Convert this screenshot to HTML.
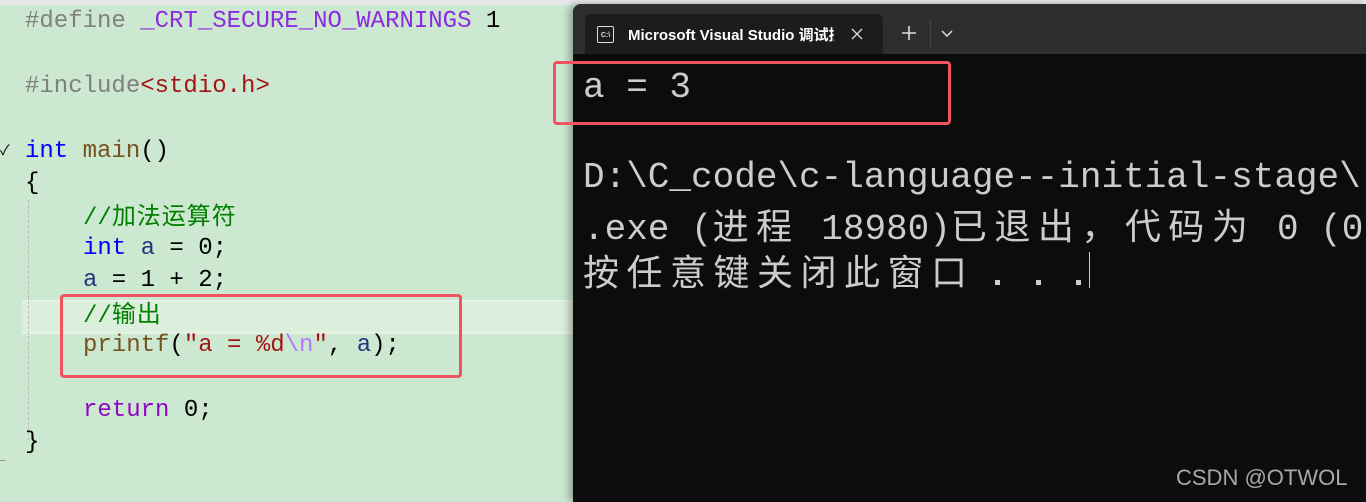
<!DOCTYPE html>
<html><head><meta charset="utf-8"><style>
body{margin:0;width:1366px;height:502px;overflow:hidden;background:#cde8d0;position:relative;font-family:"Liberation Mono","Noto Sans CJK SC",monospace}
.c{position:absolute;font-size:24px;line-height:32px;height:32px;white-space:pre;color:#000}
.cj{letter-spacing:1px;font-family:"Noto Sans CJK SC",sans-serif;line-height:32px}
.t{position:absolute;left:583px;font-size:36px;line-height:46px;height:46px;white-space:pre;color:#cccccc}
.tc{letter-spacing:7.5px;font-family:"Noto Sans CJK SC",sans-serif;line-height:46px}
.d{position:absolute;width:5px;height:5px;background:#ccc;top:280px}
</style></head><body>
<div style="position:absolute;left:0;top:0;width:1366px;height:5px;background:#e8e8ec"></div>
<div style="position:absolute;left:22px;top:300px;width:560px;height:30px;background:#dcefdc;border-top:2px solid #e6f2e6;border-bottom:2px solid #e6f2e6"></div>
<div style="position:absolute;left:28px;top:200px;height:240px;border-left:1px dashed #bbb"></div>
<div style="position:absolute;left:0;top:460px;width:6px;height:1px;background:#999"></div>
<div class="c" style="left:25px;top:6px"><span style="color:#808080">#define</span> <span style="color:#8a2be2">_CRT_SECURE_NO_WARNINGS</span> 1</div>
<div class="c" style="left:25px;top:71px"><span style="color:#808080">#include</span><span style="color:#a31515">&lt;stdio.h&gt;</span></div>
<div class="c" style="left:0px;top:136px;font-size:14px">✓</div>
<div class="c" style="left:25px;top:136px"><span style="color:#0000ff">int</span> <span style="color:#74531f">main</span>()</div>
<div class="c" style="left:25px;top:168px">{</div>
<div class="c" style="left:83px;top:198px;color:#008000">//<span class="cj">加法运算符</span></div>
<div class="c" style="left:83px;top:233px"><span style="color:#0000ff">int</span> <span style="color:#1f377f">a</span> = 0;</div>
<div class="c" style="left:83px;top:265px"><span style="color:#1f377f">a</span> = 1 + 2;</div>
<div class="c" style="left:83px;top:296px;color:#008000">//<span class="cj">输出</span></div>
<div class="c" style="left:83px;top:330px"><span style="color:#74531f">printf</span>(<span style="color:#a31515">"a = %d</span><span style="color:#b776fb">\n</span><span style="color:#a31515">"</span>, <span style="color:#1f377f">a</span>);</div>
<div class="c" style="left:83px;top:395px"><span style="color:#8f08c4">return</span> 0;</div>
<div class="c" style="left:25px;top:427px">}</div>
<div style="position:absolute;left:60px;top:294px;width:396px;height:78px;border:3px solid #f0525f;border-radius:4px"></div>
<div style="position:absolute;left:573px;top:4px;width:793px;height:498px;background:#0c0c0c;border-radius:8px 0 0 0;box-shadow:-4px 0 8px rgba(0,0,0,.3)"></div>
<div style="position:absolute;left:573px;top:4px;width:793px;height:50px;background:#2e2e2e;border-radius:8px 0 0 0"></div>
<div style="position:absolute;left:585px;top:14px;width:298px;height:40px;background:#1c1c1c;border-radius:6px 6px 0 0"></div>
<div style="position:absolute;left:597px;top:26px;width:15px;height:15px;border:1.5px solid #ddd;border-radius:2px;color:#ddd;font:bold 7px 'Liberation Sans',sans-serif;line-height:17px;text-align:center">C:\</div>
<div style="position:absolute;left:628px;top:24px;font:600 15px 'Liberation Sans','Noto Sans CJK SC',sans-serif;color:#fff;white-space:nowrap;width:206px;overflow:hidden">Microsoft Visual Studio 调试控制台</div>
<svg style="position:absolute;left:851px;top:28px" width="12" height="12"><path d="M1 1l10 10M11 1L1 11" stroke="#ddd" stroke-width="1.3"/></svg>
<svg style="position:absolute;left:902px;top:26px" width="14" height="14"><path d="M7 0v14M0 7h14" stroke="#ddd" stroke-width="1.6"/></svg>
<div style="position:absolute;left:930px;top:20px;width:1px;height:28px;background:#444"></div>
<svg style="position:absolute;left:941px;top:30px" width="12" height="8"><path d="M1 1l5 5 5-5" stroke="#ddd" stroke-width="1.5" fill="none"/></svg>
<div class="t" style="top:65px">a = 3</div>
<div class="t" style="top:155px">D:\C_code\c-language--initial-stage\</div>
<div class="t" style="top:201px">.exe (<span class="tc">进程</span> 18980)<span class="tc">已退出，代码为</span> 0 (0</div>
<div class="t" style="top:247px"><span class="tc">按任意键关闭此窗口</span></div>
<div class="d" style="left:995px"></div>
<div class="d" style="left:1036px"></div>
<div class="d" style="left:1076px"></div>
<div style="position:absolute;left:1089px;top:252px;width:1px;height:36px;background:#ccc"></div>
<div style="position:absolute;left:553px;top:61px;width:392px;height:58px;border:3px solid #f0525f;border-radius:4px"></div>
<div style="position:absolute;left:1176px;top:465px;font:22px 'Liberation Sans',sans-serif;color:#a8a8a8">CSDN @OTWOL</div>
</body></html>
